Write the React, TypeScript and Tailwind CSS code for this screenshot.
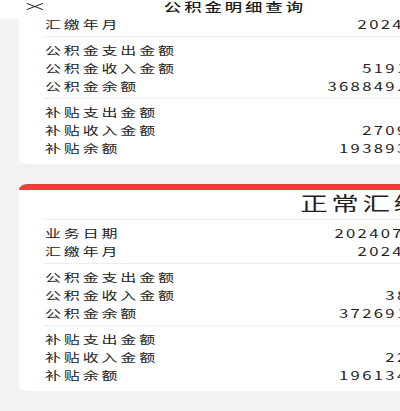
import React from "react";

type Row = [string, string];

const card1: Row[][] = [
  [
    ["业务日期", "20240615"],
    ["汇缴年月", "202406"],
  ],
  [
    ["公积金支出金额", "0"],
    ["公积金收入金额", "5191.6"],
    ["公积金余额", "368849.36"],
  ],
  [
    ["补贴支出金额", "0"],
    ["补贴收入金额", "2709.5"],
    ["补贴余额", "193893.3"],
  ],
];

const card2: Row[][] = [
  [
    ["业务日期", "20240715"],
    ["汇缴年月", "202407"],
  ],
  [
    ["公积金支出金额", "0"],
    ["公积金收入金额", "38.6"],
    ["公积金余额", "372691.5"],
  ],
  [
    ["补贴支出金额", "0"],
    ["补贴收入金额", "22.5"],
    ["补贴余额", "196134.7"],
  ],
];

function Card({ groups }: { groups: Row[][] }) {
  return (
    <div className="mx-[13px] bg-white rounded-[6px] overflow-hidden border-t-[6px] border-[#e5403a] px-[16.5px] pb-[4px]">
      <div className="h-[29px] flex items-start justify-end pt-[1px] px-[1.5px]">
        <span className="text-[19px] leading-[24px] tracking-[2.5px] text-[#1f1f1f]">正常汇缴</span>
      </div>
      {groups.map((g, gi) => (
        <div key={gi} className="border-t border-[#ededed] pt-[3.5px] pb-[3.5px]">
          {g.map(([label, value], ri) => (
            <div key={ri} className="h-[18px] flex items-center justify-between px-[1.5px] leading-[18px] text-[#222]">
              <span className="text-[11px] tracking-[2px] whitespace-nowrap">{label}</span>
              <span className="text-[11.5px] tracking-[1.6px] whitespace-nowrap -mr-[1.5px]">{value}</span>
            </div>
          ))}
        </div>
      ))}
    </div>
  );
}

export default function App() {
  return (
    <div
      className="w-[400px] h-[411px] overflow-hidden bg-[#f2f2f2]"
      style={{ fontFamily: '"Noto Sans CJK SC", "Noto Sans", sans-serif' }}
    >
      <div className="w-[324px] h-[411px] origin-top-left scale-x-[1.45] flex flex-col">
        <div className="h-[19px] shrink-0 bg-white grid grid-cols-[1fr_auto_1fr] items-start">
          <div className="pl-[17.5px] pt-[3px]">
            <svg width="12" height="7" viewBox="0 0 12 7" className="block">
              <path d="M0.4 0.4 L11.6 6.6 M11.6 0.4 L0.4 6.6" stroke="#222" strokeWidth="0.9" fill="none" />
            </svg>
          </div>
          <div className="text-[12px] leading-[14px] tracking-[2px] text-[#1a1a1a] font-medium">公积金明细查询</div>
          <div />
        </div>
        <div className="flex-1 overflow-hidden">
          <div className="mt-[-62px] flex flex-col gap-[20px]">
            <Card groups={card1} />
            <Card groups={card2} />
          </div>
        </div>
      </div>
    </div>
  );
}
